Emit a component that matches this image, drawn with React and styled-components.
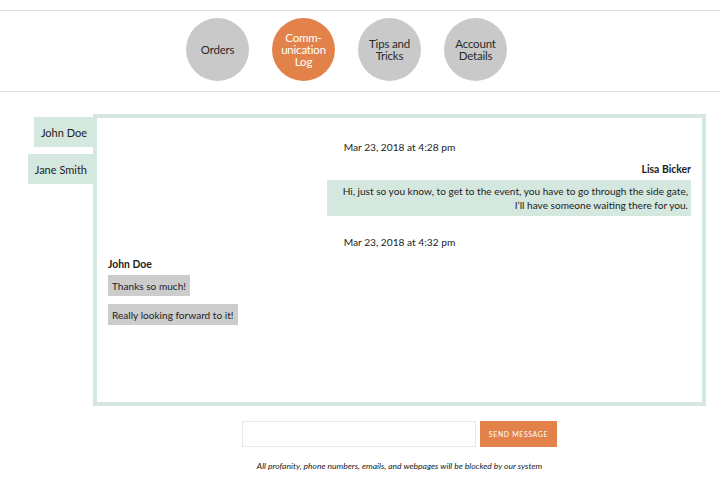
import React from "react";
import styled, { createGlobalStyle } from "styled-components";

const Global = createGlobalStyle`
  html, body { margin: 0; padding: 0; background: #fff; }
  body { font-family: Lato, "Noto Sans", sans-serif; color: #222; }
  * { box-sizing: border-box; }
`;

const Header = styled.header`
  margin-top: 10px;
  height: 82px;
  border-top: 1px solid #dedede;
  border-bottom: 1px solid #dedede;
  padding: 7px 0 0 186px;
`;

const Nav = styled.nav`
  display: flex;
  gap: 23px;
`;

const Circle = styled.div`
  width: 63px;
  height: 63px;
  border-radius: 50%;
  background: ${(p) => (p.$active ? "#e2824a" : "#c9c9c9")};
  color: ${(p) => (p.$active ? "#fff" : "#2a2a2a")};
  display: flex;
  align-items: center;
  justify-content: center;
  text-align: center;
  font-size: 11.5px;
  line-height: 12px;
  letter-spacing: -0.2px;
`;

const Main = styled.main`
  margin-top: 22px;
  display: flex;
`;

const Tabs = styled.div`
  width: 93px;
  display: flex;
  flex-direction: column;
  align-items: flex-end;
  gap: 7px;
  padding-top: 3px;
`;

const Tab = styled.div`
  background: #d5e8df;
  height: 30px;
  padding: 0 6px 0 7px;
  display: flex;
  align-items: center;
  font-size: 11px;
  color: #222;
`;

const Box = styled.section`
  width: 613px;
  height: 292px;
  border: 4px solid #d5e8df;
  padding: 22px 11px 0 11px;
  display: flex;
  flex-direction: column;
`;

const DateLine = styled.div`
  text-align: center;
  font-size: 10.2px;
  line-height: 14px;
  margin-top: ${(p) => p.$mt || 0}px;
`;

const Sender = styled.div`
  font-weight: 700;
  font-size: 10.4px;
  line-height: 14px;
  margin-top: 8px;
  align-self: ${(p) => (p.$right ? "flex-end" : "flex-start")};
`;

const Bubble = styled.div`
  background: ${(p) => (p.$mine ? "#d5e8df" : "#cccccc")};
  align-self: ${(p) => (p.$mine ? "flex-end" : "flex-start")};
  text-align: ${(p) => (p.$mine ? "right" : "left")};
  max-width: 364px;
  font-size: 10.1px;
  line-height: 14px;
  padding: ${(p) => (p.$mine ? "4px 3px 4px 4px" : "4px 4px 3px")};
  margin-top: ${(p) => p.$mt}px;
`;

const Composer = styled.div`
  margin-left: 93px;
  width: 613px;
  display: flex;
  flex-direction: column;
  align-items: center;
  padding-top: 15px;
`;

const Row = styled.div`
  display: flex;
  gap: 4px;
`;

const Input = styled.input`
  width: 234px;
  height: 26px;
  border: 1px solid #e8e8e8;
  outline: none;
  font-family: inherit;
`;

const Send = styled.button`
  width: 77px;
  height: 26px;
  border: none;
  background: #e2824a;
  color: #fff;
  font-family: inherit;
  font-size: 7px;
  letter-spacing: 0.6px;
  padding: 0;
`;

const Note = styled.p`
  margin: 14px 0 0;
  font-style: italic;
  font-size: 8.5px;
  color: #1a1a1a;
`;

export default function App() {
  return (
    <>
      <Global />
      <Header>
        <Nav>
          <Circle>Orders</Circle>
          <Circle $active>
            Comm-
            <br />
            unication
            <br />
            Log
          </Circle>
          <Circle>
            Tips and
            <br />
            Tricks
          </Circle>
          <Circle>
            Account
            <br />
            Details
          </Circle>
        </Nav>
      </Header>
      <Main>
        <Tabs>
          <Tab>John Doe</Tab>
          <Tab>Jane Smith</Tab>
        </Tabs>
        <Box>
          <DateLine>Mar 23, 2018 at 4:28 pm</DateLine>
          <Sender $right>Lisa Bicker</Sender>
          <Bubble $mine $mt={4}>
            Hi, just so you know, to get to the event, you have to go through the side gate, I’ll have someone waiting there for you.
          </Bubble>
          <DateLine $mt={19}>Mar 23, 2018 at 4:32 pm</DateLine>
          <Sender>John Doe</Sender>
          <Bubble $mt={4}>Thanks so much!</Bubble>
          <Bubble $mt={8}>Really looking forward to it!</Bubble>
        </Box>
      </Main>
      <Composer>
        <Row>
          <Input />
          <Send>SEND MESSAGE</Send>
        </Row>
        <Note>All profanity, phone numbers, emails, and webpages will be blocked by our system</Note>
      </Composer>
    </>
  );
}
